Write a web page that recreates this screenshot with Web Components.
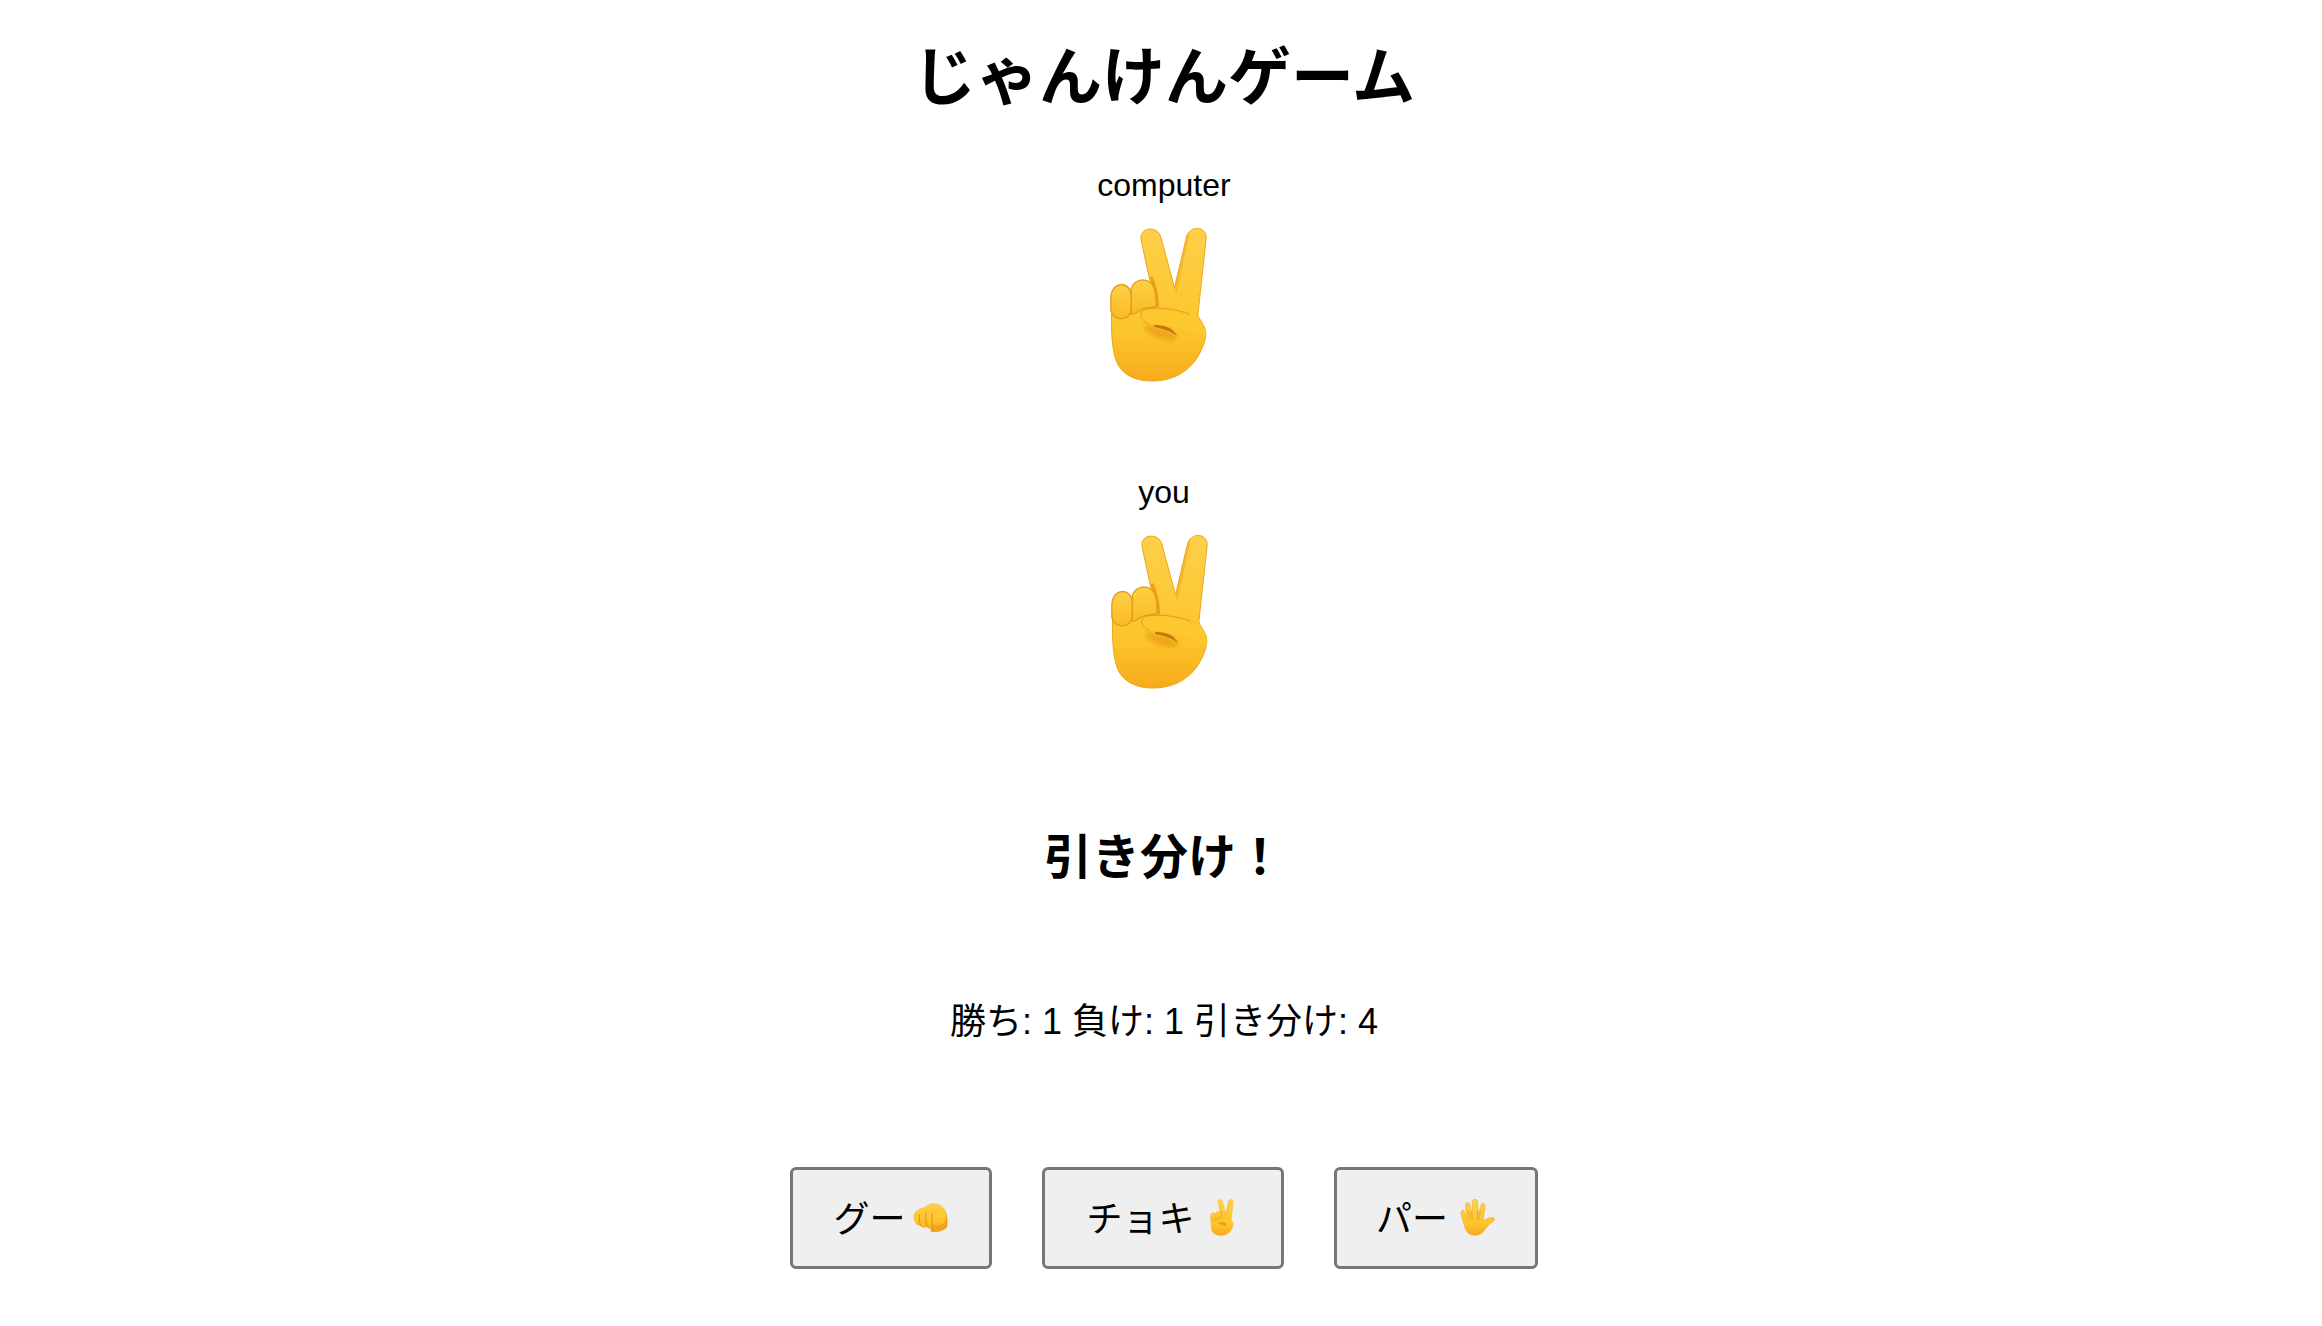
<!DOCTYPE html>
<html lang="ja">
<head>
<meta charset="utf-8">
<title>じゃんけんゲーム</title>
<style>
  html, body { margin: 0; padding: 0; background: #fff; }
  body { font-family: "Liberation Sans", "Noto Sans CJK JP", sans-serif; color: #000; }
</style>
</head>
<body>

<janken-game>
  <game-title>じゃんけんゲーム</game-title>
  <player-hand label="computer"></player-hand>
  <player-hand label="you"></player-hand>
  <game-result>引き分け！</game-result>
  <game-score win="1" lose="1" draw="4"></game-score>
  <choice-bar>
    <choice-button hand="rock" width="202">グー</choice-button>
    <choice-button hand="scissors" width="242">チョキ</choice-button>
    <choice-button hand="paper" width="204">パー</choice-button>
  </choice-bar>
</janken-game>

<script>
  // gradients and filters get a prefix so each drawing has its own ids
  const defs = (id) => `
    <defs>
      <linearGradient id="${id}" x1="0" y1="0" x2="0" y2="1">
        <stop offset="0" stop-color="#fdd04a"/>
        <stop offset="0.7" stop-color="#fcc42a"/>
        <stop offset="1" stop-color="#f7ab1d"/>
      </linearGradient>
      <linearGradient id="${id}t" x1="0" y1="0" x2="0" y2="1">
        <stop offset="0" stop-color="#fdd044"/>
        <stop offset="1" stop-color="#fabb26"/>
      </linearGradient>
      <filter id="${id}b" x="-30%" y="-60%" width="160%" height="220%"><feGaussianBlur stdDeviation="7"/></filter>
      <filter id="${id}c" x="-30%" y="-60%" width="160%" height="220%"><feGaussianBlur stdDeviation="2"/></filter>
      <filter id="${id}s" x="-5%" y="-5%" width="110%" height="110%"><feGaussianBlur stdDeviation="1"/></filter>
    </defs>`;

  const victory = (id) => `
    <svg viewBox="150 198 296 468" xmlns="http://www.w3.org/2000/svg">
      ${defs(id)}
      <g filter="url(#${id}s)">
      <path fill="url(#${id})" stroke="#eca522" stroke-width="3" d="M158 430 C155 510 158 565 172 602 C190 645 235 662 285 660 C350 658 400 625 425 570 C440 540 445 515 434 495 C428 482 420 474 416 462 L441 232 C443 193 390 193 382 228 L346 380 L305 228 C295 192 238 198 246 238 L272 358 L290 432 L200 440 Z"/>
      <path fill="#f0a81f" opacity=".5" d="M346 380 L382 228 L392 215 L352 400 Z"/>
      <path fill="#eba11d" d="M270 350 C284 375 292 400 290 436 L300 440 C300 400 290 370 280 345 Z"/>
      <path fill="url(#${id}t)" stroke="#e59a1c" stroke-width="4" d="M216 384 C224 350 278 342 288 392 L292 436 L250 444 C236 450 226 464 216 458 Z"/>
      <path fill="url(#${id}t)" stroke="#e59a1c" stroke-width="4" d="M155 412 C155 358 216 358 216 405 L216 445 C214 484 157 482 155 445 Z"/>
      <path fill="#e99a18" opacity=".7" filter="url(#${id}b)" d="M258 490 C300 505 340 500 354 530 C335 548 300 535 258 510 Z"/>
      <path fill="#fcc82f" d="M262 444 C300 438 360 446 400 464 C428 476 444 500 438 532 C425 516 395 505 352 500 C320 492 290 494 266 486 C238 476 240 448 262 444 Z"/>
      <path fill="#c9760f" filter="url(#${id}c)" d="M285 491 C312 494 340 494 354 526 C340 512 315 504 285 498 Z"/>
      <path fill="none" stroke="#e59a1c" stroke-width="3" d="M266 486 C238 476 240 448 262 444 C300 438 350 444 392 460"/>
      </g>
    </svg>`;

  const fist = (id) => `
    <svg viewBox="40 40 100 90" xmlns="http://www.w3.org/2000/svg">
      ${defs(id)}
      <path fill="#ed9f1c" d="M92 60 L130 58 C140 70 142 90 140 112 C130 124 110 130 92 126 Z"/>
      <path fill="url(#${id})" d="M42 82 C44 66 62 56 78 54 C84 42 108 40 122 50 C134 58 138 72 136 92 C128 110 112 112 98 108 L98 114 C94 122 84 118 82 112 C76 116 66 116 62 108 C52 110 44 102 42 82 Z"/>
      <path fill="none" stroke="#d08a14" stroke-width="2.500" stroke-linecap="round" d="M60 76 C58 88 60 100 62 108 M78 70 C76 86 78 100 82 112 M96 72 C95 88 96 100 98 114"/>
      <path fill="#fcc834" d="M68 70 C82 58 116 56 132 66 C128 76 112 78 100 74 C90 72 78 74 68 70 Z"/>
      <path fill="#f1a41d" d="M98 110 C110 112 128 108 138 92 L140 112 C130 124 112 128 94 127 C94 122 98 118 98 110 Z"/>
    </svg>`;

  const paper = (id) => `
    <svg viewBox="30 30 106 112" xmlns="http://www.w3.org/2000/svg">
      ${defs(id)}
      <path fill="url(#${id})" stroke="#eca522" stroke-width="1.500" d="M33 76 C31 62 42 60 44 70 L50 88 L47 50 C46 38 58 38 60 48 L66 80 L67 40 C67 28 84 28 84 40 L84 80 L93 50 C96 38 108 42 106 52 L100 96 C108 92 118 86 128 86 C136 86 136 94 130 98 C118 106 110 116 102 128 C94 138 84 141 72 140 C54 138 47 126 44 112 Z"/>
      <path fill="none" stroke="#dc9618" stroke-width="1.800" stroke-linecap="round" d="M55 66 L60 92 M65 66 L67 92 M84 66 L82 92 M92 66 L87 92"/>
    </svg>`;

  const HANDS = {
    rock: { draw: fist, w: 36, h: 31, gap: 6, pad: 0 },
    scissors: { draw: victory, w: 24, h: 37, gap: 15, pad: 5 },
    paper: { draw: paper, w: 35, h: 37, gap: 12, pad: 0 },
  };
  let gradCount = 0;
  const nextId = () => "skin" + (++gradCount);

  class JankenGame extends HTMLElement {
    constructor() {
      super();
      this.attachShadow({ mode: "open" });
      this.shadowRoot.innerHTML = `
        <style>
          :host { display: flex; flex-direction: column; align-items: center; box-sizing: border-box; width: 2322px; height: 1326px; padding-left: 6px; overflow: hidden; text-align: center; }
        </style>
        <slot></slot>`;
    }
  }

  class GameTitle extends HTMLElement {
    constructor() {
      super();
      this.attachShadow({ mode: "open" });
      this.shadowRoot.innerHTML = `
        <style>
          :host { display: block; margin-top: 40px; }
          h1 { margin: 0; font-size: 63px; line-height: 74px; font-weight: 700; }
        </style>
        <h1><slot></slot></h1>`;
    }
  }

  class PlayerHand extends HTMLElement {
    constructor() {
      super();
      this.attachShadow({ mode: "open" });
    }

    connectedCallback() {
      const label = this.getAttribute("label") || "";
      this.shadowRoot.innerHTML = `
        <style>
          :host { display: flex; flex-direction: column; align-items: center; margin-top: 53px; height: 254px; }
          .label { font-size: 32px; line-height: 37px; }
          .hand { display: block; width: 99px; height: 156px; margin-top: 23px; margin-left: -10px; }
          svg { display: block; width: 100%; height: 100%; }
        </style>
        <div class="label">${label}</div>
        <div class="hand">${victory(nextId())}</div>
      `;
    }
  }

  class GameResult extends HTMLElement {
    constructor() {
      super();
      this.attachShadow({ mode: "open" });
      this.shadowRoot.innerHTML = `
        <style>
          :host { display: block; margin-top: 102px; }
          h2 { margin: 0; font-size: 48px; line-height: 56px; font-weight: 700; }
        </style>
        <h2><slot></slot></h2>`;
    }
  }

  class GameScore extends HTMLElement {
    constructor() {
      super();
      this.attachShadow({ mode: "open" });
    }

    connectedCallback() {
      const win = this.getAttribute("win");
      const lose = this.getAttribute("lose");
      const draw = this.getAttribute("draw");
      this.shadowRoot.innerHTML = `
        <style>
          :host { display: block; margin-top: 115px; font-size: 36px; line-height: 42px; }
        </style>
        勝ち: ${win} 負け: ${lose} 引き分け: ${draw}
      `;
    }
  }

  class ChoiceBar extends HTMLElement {
    constructor() {
      super();
      this.attachShadow({ mode: "open" });
      this.shadowRoot.innerHTML = `
        <style>
          :host { display: flex; gap: 50px; margin-top: 124px; margin-left: -1px; }
        </style>
        <slot></slot>`;
    }
  }

  class ChoiceButton extends HTMLElement {
    constructor() {
      super();
      this.attachShadow({ mode: "open" });
    }

    connectedCallback() {
      const hand = HANDS[this.getAttribute("hand")] || HANDS.rock;
      const width = this.getAttribute("width") || 202;
      this.shadowRoot.innerHTML = `
        <style>
          :host { display: block; }
          button {
            display: flex; align-items: center; justify-content: center; gap: ${hand.gap}px;
            width: ${width}px; height: 102px; padding: 0 ${hand.pad}px 0 0; box-sizing: border-box;
            font: inherit; font-size: 36px; color: #000;
            background: #efefef; border: 3px solid #767676; border-radius: 6px;
          }
          .text { margin-bottom: 5px; }
          .emoji { display: block; width: ${hand.w}px; height: ${hand.h}px; margin-bottom: 2px; }
          svg { display: block; width: 100%; height: 100%; }
        </style>
        <button type="button"><span class="text"><slot></slot></span><span class="emoji">${hand.draw(nextId())}</span></button>
      `;
    }
  }

  customElements.define("janken-game", JankenGame);
  customElements.define("game-title", GameTitle);
  customElements.define("player-hand", PlayerHand);
  customElements.define("game-result", GameResult);
  customElements.define("game-score", GameScore);
  customElements.define("choice-bar", ChoiceBar);
  customElements.define("choice-button", ChoiceButton);
</script>
</body>
</html>
